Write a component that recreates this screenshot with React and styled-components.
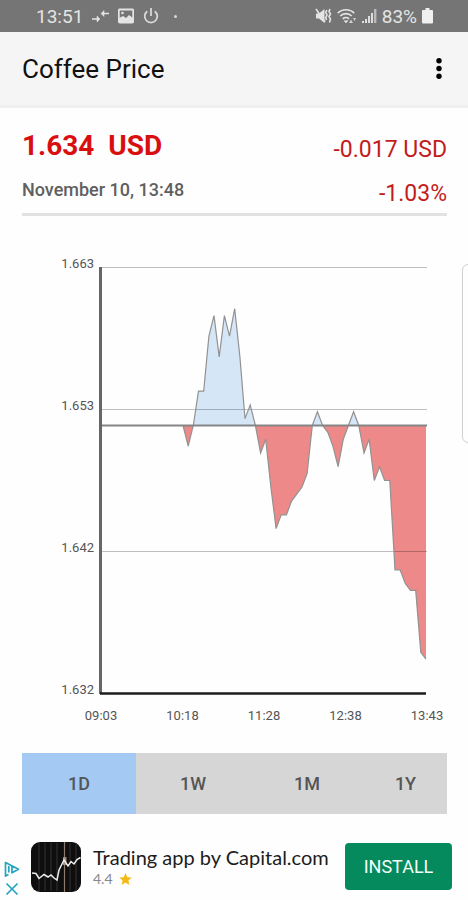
import React, { useState } from 'react'
import styled, { createGlobalStyle } from 'styled-components'

const PERIODS = [
    { id: '1D', grow: 114 },
    { id: '1W', grow: 114 },
    { id: '1M', grow: 114 },
    { id: '1Y', grow: 83 },
]

const Y_LABELS = ['1.663', '1.653', '1.642', '1.632']
const X_LABELS = ['09:03', '10:18', '11:28', '12:38', '13:43']

// distance below the previous close, in steps of 0.0005 USD
const SERIES = [
    0, 3, 0, -5, -5, -13, -16, -10, -16, -13, -17, -10, -1, -3, 0, 4,
    2, 9, 15, 13, 13, 11, 10, 9, 7, 0, -2, 0, 1, 3, 6, 2,
    0, -2, 0, 4, 2, 8, 6, 8, 8, 21, 21, 23, 24, 24, 33, 34,
]

const PLOT = { left: 79, right: 404, top: 17, bottom: 443, start: 161, base: 175.5 }
const STEP = (PLOT.bottom - PLOT.top) / 62

function PriceChart() {
    const points = SERIES.map((v, i) => {
        const x = PLOT.start + (i * (PLOT.right - PLOT.start)) / (SERIES.length - 1)
        return `${x.toFixed(1)},${(PLOT.base + v * STEP).toFixed(1)}`
    })
    const line = `M${points.join('L')}`
    const area = `${line}V${PLOT.base}H${PLOT.start}Z`

    return (
        <Chart viewBox='0 0 425 480' role='img' aria-label='Coffee price today'>
            <defs>
                <clipPath id='above'>
                    <rect x='0' y='0' width='425' height={PLOT.base} />
                </clipPath>
                <clipPath id='below'>
                    <rect x='0' y={PLOT.base} width='425' height='300' />
                </clipPath>
            </defs>

            <path d={area} fill='#d5e6f7' clipPath='url(#above)' />
            <path d={area} fill='#ee8989' clipPath='url(#below)' />

            {Y_LABELS.map((label, i) => {
                const y = PLOT.top + i * 142
                return (
                    <g key={label}>
                        {i < 3 && <path d={`M${PLOT.left} ${y + 0.5}H405`} stroke='#000' strokeOpacity='.25' />}
                        <AxisText x='72' y={y + 1} textAnchor='end'>{label}</AxisText>
                    </g>
                )
            })}

            <path d={line} fill='none' stroke='#929292' strokeWidth='1.2' />
            <path d={`M${PLOT.left} ${PLOT.base}H405`} stroke='#858585' strokeWidth='2' />
            <path d='M78.5 17V444' stroke='#666' strokeWidth='3' />
            <path d='M78 443.5H404' stroke='#1c1c1c' strokeWidth='2.4' />

            {X_LABELS.map((label, i) => (
                <AxisText key={label} x={79 + i * 81.5} y='470' textAnchor='middle'>{label}</AxisText>
            ))}
        </Chart>
    )
}

function StatusBar() {
    return (
        <Status>
            <StatusGroup>
                <span>13:51</span>
                <svg width='17' height='16' viewBox='0 0 17 16' fill='none' stroke='#e4e4e4' strokeWidth='1.6'>
                    <path d='M0 11H6M17 5.5H10' />
                    <path d='M5 8L8 11L5 14ZM12 2.5L9 5.5L12 8.5Z' fill='#e4e4e4' strokeWidth='.5' />
                </svg>
                <svg width='16' height='16' viewBox='0 0 16 16'>
                    <rect x='.8' y='1.5' width='14.4' height='13' rx='1' fill='none' stroke='#e4e4e4' strokeWidth='1.8' />
                    <path d='M1 14V10L5 8L8 10L11 7L15 10V14Z' fill='#e4e4e4' />
                    <circle cx='4.5' cy='5' r='1.3' fill='#e4e4e4' />
                </svg>
                <svg width='16' height='16' viewBox='0 0 16 16' fill='none' stroke='#d8d8d8' strokeWidth='1.8'>
                    <path d='M8 0V8M4.3 3.2A6.3 6.3 0 1 0 11.7 3.2' />
                </svg>
                <Dot />
            </StatusGroup>
            <StatusGroup $tight>
                <svg width='17' height='16' viewBox='0 0 17 16'>
                    <path d='M1 5.5H4L9.5 1V15L4 10.5H1Z' fill='#e4e4e4' />
                    <path d='M1 1L10 14' stroke='#e4e4e4' strokeWidth='1.6' />
                    <path d='M11.8 2L10.8 4.500L12 7L10.8 9.500L11.5 12M15 1L14 3.5L15.5 6L14 8.5L15.5 11L14.5 14.5' fill='none' stroke='#e4e4e4' strokeWidth='1.6' />
                </svg>
                <svg width='20' height='16' viewBox='0 0 20 16' fill='none' stroke='#e4e4e4' strokeWidth='1.7'>
                    <path d='M.8 5.2A11.5 11.5 0 0 1 17.2 5.2M3.3 8A8 8 0 0 1 14.7 8M5.8 10.8A4.6 4.6 0 0 1 12 10.8' />
                    <path d='M7 12.7L9 15L11 12.7Z' fill='#e4e4e4' strokeWidth='.5' />
                    <path d='M12 15L14 11.500L16 15ZM16 10L19 10L17.500 13Z' fill='#d0d0d0' stroke='none' />
                </svg>
                <svg width='15' height='16' viewBox='0 0 15 16' fill='#dedede'>
                    <path d='M0 13h2v2H0zM3 11h2v4H3zM6 8h2v7H6zM9 5h2v10H9z' />
                    <path d='M12 1h2.4v14H12z' fillOpacity='.65' />
                </svg>
                <span>83%</span>
                <svg width='11' height='16' viewBox='0 0 11 16' fill='#f0f0f0'>
                    <path d='M3.5 0h4v2H10q1 0 1 1v11.5q0 1-1 1H1q-1 0-1-1V3q0-1 1-1h2.5z' />
                </svg>
            </StatusGroup>
        </Status>
    )
}

function AdBanner() {
    return (
        <Ad>
            <AdMarks>
                <svg width='16' height='17' viewBox='0 0 16 17' fill='none' stroke='#22a5bd' strokeWidth='1.7'>
                    <path d='M4.5 13.5L1.5 15V1.5L14.5 8.3L8 11.800V5.500' strokeLinejoin='round' />
                    <path d='M4.800 5V11.5' />
                </svg>
                <svg width='16' height='14' viewBox='0 0 16 14' stroke='#22a5bd' strokeWidth='1.7'>
                    <path d='M2.5 1.5L13.5 12.5M13.5 1.5L2.5 12.5' />
                </svg>
            </AdMarks>
            <svg width='50' height='50' viewBox='0 0 50 50'>
                <rect width='50' height='50' rx='9' fill='#0e0e0e' />
                <path d='M8 1V49M14 1V49M20 1V49M26 1V49M39 1V49M45 1V49' stroke='#2c2c2c' strokeWidth='1.3' />
                <path d='M33.5 0V50' stroke='#8d7a6c' strokeWidth='1.2' />
                <path d='M32 15H35.5V23H32Z' fill='#a58c78' />
                <path d='M1 31L5 31.5L8 36.5L13 32.5L17 35L20 33L23 36L26 38L28 28L31 22L33 18L37 24L40 19.5L43 22L46 17.5L49.5 15.5' fill='none' stroke='#ededed' strokeWidth='1.5' />
            </svg>
            <AdText>
                <p>Trading app by Capital.com</p>
                <Rating>
                    4.4
                    <svg width='13' height='12' viewBox='0 0 24 23' fill='#f5b915'>
                        <path d='M12 0L15.5 8L24 8.8L17.5 14.4L19.5 23L12 18.3L4.5 23L6.5 14.4L0 8.8L8.5 8Z' />
                    </svg>
                </Rating>
            </AdText>
            <InstallButton type='button'>INSTALL</InstallButton>
        </Ad>
    )
}

function App() {
    const [period, setPeriod] = useState('1D')

    return (
        <Page>
            <GlobalStyle />
            <StatusBar />
            <Header>
                <h1>Coffee Price</h1>
                <MenuButton type='button' aria-label='More options'>
                    <svg width='6' height='22' viewBox='0 0 6 22'>
                        <circle cx='3' cy='2.8' r='2.7' />
                        <circle cx='3' cy='10.5' r='2.7' />
                        <circle cx='3' cy='18.2' r='2.7' />
                    </svg>
                </MenuButton>
            </Header>

            <Content>
                <Summary>
                    <div>
                        <Price>1.634&nbsp; USD</Price>
                        <Updated>November 10, 13:48</Updated>
                    </div>
                    <Change>
                        <p>-0.017 USD</p>
                        <p>-1.03%</p>
                    </Change>
                </Summary>
                <PriceChart />
                <Periods>
                    {PERIODS.map((p) => (
                        <PeriodButton
                            key={p.id}
                            type='button'
                            $grow={p.grow}
                            $active={p.id === period}
                            aria-pressed={p.id === period}
                            onClick={() => setPeriod(p.id)}
                        >
                            {p.id}
                        </PeriodButton>
                    ))}
                </Periods>
            </Content>

            <AdBanner />
            <EdgeHandle />
        </Page>
    )
}

export default App

const GlobalStyle = createGlobalStyle`
    * {
        box-sizing: border-box;
    }

    body {
        margin: 0;
        background: #fefefe;
        font-family: Roboto, sans-serif;
    }

    h1, p {
        margin: 0;
    }

    button {
        border: 0;
        padding: 0;
        font-family: inherit;
        cursor: pointer;
    }

    svg {
        display: block;
        flex-shrink: 0;
    }
`

const Page = styled.div`
    position: relative;
    overflow: hidden;
`

const Status = styled.div`
    display: flex;
    justify-content: space-between;
    height: 32px;
    padding: 0 35px 0 36px;
    background: #757575;
    color: #e4e4e4;
    font-size: 19px;
`

const StatusGroup = styled.div`
    display: flex;
    align-items: center;
    gap: ${({ $tight }) => ($tight ? '5px' : '9px')};
`

const Dot = styled.span`
    width: 3px;
    height: 3px;
    margin-left: 6px;
    border-radius: 50%;
    background: #d8d8d8;
`

const Header = styled.header`
    display: flex;
    align-items: center;
    justify-content: space-between;
    height: 76px;
    padding: 0 20px 0 22px;
    background: #f5f5f5;
    border-bottom: 3px solid #efefef;

    h1 {
        font-size: 26px;
        font-weight: 400;
        color: #111;
    }
`

const MenuButton = styled.button`
    display: flex;
    justify-content: flex-end;
    width: 18px;
    padding: 0 6px;
    background: none;
`

const Content = styled.main`
    padding: 0 21px 0 22px;
`

const Summary = styled.section`
    display: flex;
    justify-content: space-between;
    height: 108px;
    padding-top: 20px;
    margin-bottom: 34px;
    border-bottom: 3px solid #e2e2e2;
`

const Price = styled.p`
    font-size: 28px;
    line-height: 36px;
    font-weight: 700;
    color: #d90f0f;
`

const Updated = styled.p`
    margin-top: 16px;
    font-size: 18px;
    line-height: 20px;
    font-weight: 500;
    color: #606060;
`

const Change = styled.div`
    font-size: 23px;
    line-height: 44px;
    text-align: right;
    color: #c21c1c;
`

const Chart = styled.svg`
    width: 100%;
    height: auto;
`

const AxisText = styled.text`
    font-size: 13px;
    fill: #555;
`

const Periods = styled.div`
    display: flex;
    margin-top: 23px;
    background: #d6d6d6;
`

const PeriodButton = styled.button`
    flex: ${({ $grow }) => $grow} 1 0;
    height: 61px;
    background: ${({ $active }) => ($active ? '#a4c9f3' : '#d6d6d6')};
    font-size: 18px;
    font-weight: 500;
    color: #555;
`

const Ad = styled.aside`
    display: flex;
    align-items: flex-start;
    padding: 28px 16px 4px 4px;
`

const AdMarks = styled.div`
    display: grid;
    gap: 4px;
    margin-top: 19px;
    margin-right: 11px;
`

const AdText = styled.div`
    flex: 1;
    margin-top: 4px;
    margin-left: 12px;
    font-family: Lato, sans-serif;
    font-size: 20px;
    line-height: 22px;
    white-space: nowrap;
    color: #1c1c1c;
`

const Rating = styled.p`
    display: flex;
    align-items: center;
    gap: 6px;
    font-size: 14px;
    color: #888;
`

const InstallButton = styled.button`
    width: 107px;
    height: 47px;
    margin-top: 1px;
    border-radius: 4px;
    background: #058a5e;
    font-size: 18px;
    color: #f4fffa;
`

const EdgeHandle = styled.div`
    position: absolute;
    top: 264px;
    right: -12px;
    width: 18px;
    height: 179px;
    border: 1px solid #d0d0d0;
    border-radius: 6px;
    background: #fefefe;
`
